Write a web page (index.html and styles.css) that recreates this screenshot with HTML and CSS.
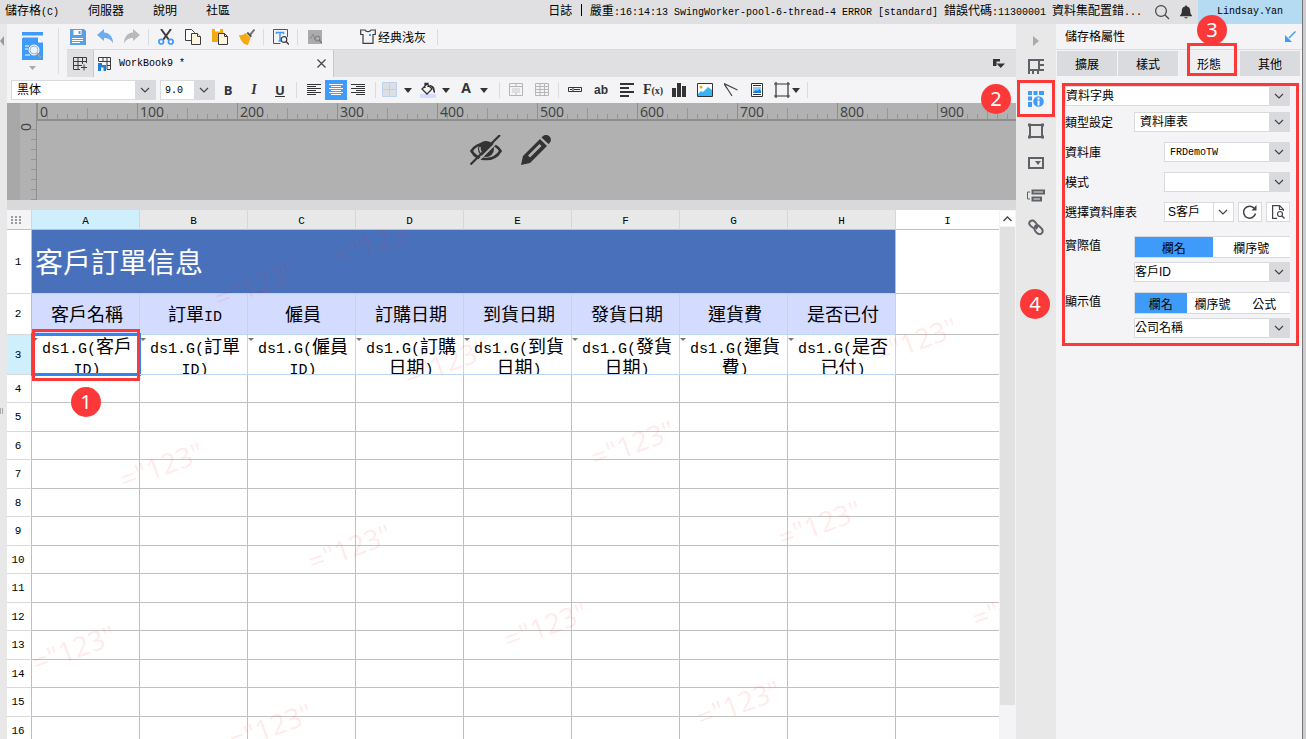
FILE: index.html
```html
<!DOCTYPE html>
<html lang="zh-Hant">

<head>
    <meta charset="utf-8">
    <title>WorkBook9</title>
    <link rel="stylesheet" href="styles.css">
</head>

<body>

    <div class="app">

        <header class="topbar">
            <nav class="menu">
                <a href="#">儲存格<span class="code">(C)</span></a>
                <a href="#">伺服器</a>
                <a href="#">說明</a>
                <a href="#">社區</a>
            </nav>
            <div class="log">日誌 <span class="log-bar"></span> 嚴重<span class="code">:16:14:13 SwingWorker-pool-6-thread-4 ERROR [standard] </span>錯誤代碼<span class="code">:11300001 </span>資料集配置錯<span class="code">...</span></div>
            <button class="icon-btn" aria-label="搜尋">
                <svg width="16" height="16" viewBox="0 0 16 16" fill="none" stroke="#444" stroke-width="1.2"><circle cx="7" cy="7" r="5.4"/><path d="M11 11l4 4"/></svg>
            </button>
            <button class="icon-btn" aria-label="通知">
                <svg width="14" height="14" viewBox="0 0 14 14" fill="#333"><path d="M7 0.5c.8 0 1 .5 1 1 2.300.5 3.200 2.200 3.200 4.500 0 2.500.8 3.500 1.800 4.500v.8H1v-.8c1-1 1.800-2 1.800-4.500C2.800 3.700 3.700 2 6 1.500c0-.5.2-1 1-1zM5.300 12.200h3.400c-.3 1.600-3.100 1.600-3.400 0z"/></svg>
            </button>
            <a class="user code" href="#">Lindsay.Yan</a>
        </header>

        <div class="main">

            <div class="left-edge">
                <svg width="4" height="10" viewBox="0 0 4 10"><path d="M4 0v10L0 5z" fill="#999"/></svg>
                <svg class="grip" width="4" height="6" viewBox="0 0 4 6"><path d="M.5 0v6M2.500 0v6" stroke="#aaa"/></svg>
            </div>

            <main class="workspace">

                <div class="upper">
                    <button class="dataset" aria-label="資料集">
                        <svg width="22" height="28" viewBox="0 0 22 28"><path fill="#3f9bfa" d="M0 0h21v3.500H0zM1 5.500h15l5 5V28H0V6.500z"/><path fill="#fff" d="M16 5.500v5h5z"/><path d="M3 14h4M3 17h3M3 23h5" stroke="#fff"/><circle cx="12" cy="18" r="5" fill="#e6f2ff" stroke="#fff"/><circle cx="12" cy="18" r="4" fill="#e6f2ff" stroke="#a5b5c8"/><path d="M15 21.500l4 4" stroke="#9a9a9a" stroke-width="2.400"/></svg>
                        <svg width="8" height="5" viewBox="0 0 8 5"><path d="M0 0h7L3.500 4z" fill="#aaa"/></svg>
                    </button>

                    <div class="upper-right">
                        <div class="tools">
                            <button aria-label="儲存"><svg width="16" height="16" viewBox="0 0 16 16"><path fill="#5b9fe3" d="M0 0h14l2 2v14H0z"/><path fill="#fff" d="M3.500 1h8v5h-8zM2 9h11v1H2zM2 11h11v1H2zM2 13h8v1H2z"/><path fill="#5b9fe3" d="M8.500 2h2v3h-2z"/></svg></button>
                            <button aria-label="復原"><svg width="16" height="16" viewBox="0 0 16 16"><path fill="#6badf0" d="M0 6L7 0v3.500c6 .5 9 5 9 11-2-4-5-5.500-9-5.500V12z"/></svg></button>
                            <button aria-label="重做"><svg width="16" height="16" viewBox="0 0 16 16"><path fill="#b9b9bc" d="M16 6L9 0v3.500C3 4 0 8.500 0 14.500 2 10.500 5 9 9 9v3z"/></svg></button>
                            <span class="sep"></span>
                            <button aria-label="剪下"><svg width="16" height="16" viewBox="0 0 16 16" fill="none"><path d="M3 0l8 11M13 0L5 11" stroke="#3c3c40" stroke-width="2"/><circle cx="3.200" cy="12.700" r="2.300" stroke="#3f9bfa" stroke-width="1.700"/><circle cx="12.800" cy="12.700" r="2.300" stroke="#3f9bfa" stroke-width="1.700"/></svg></button>
                            <button aria-label="複製"><svg width="16" height="16" viewBox="0 0 16 16" fill="#fff" stroke="#3c3c40"><path d="M.5 .5h6l3 3v8h-9z"/><path fill="#fdf6dc" d="M6.500 4.500h6l3 3v8h-9z"/><path d="M12.500 4.500v3h3"/></svg></button>
                            <button aria-label="貼上"><svg width="16" height="16" viewBox="0 0 16 16"><path fill="#f5aa14" d="M0 0h11v13H0z"/><path fill="#fff" d="M3 0h5v2.500H3z"/><path fill="#fdf6dc" stroke="#3c3c40" d="M6.500 4.500h6l3 3v8h-9z"/><path fill="none" stroke="#3c3c40" d="M12.500 4.500v3h3"/></svg></button>
                            <button aria-label="格式刷"><svg width="16" height="16" viewBox="0 0 16 16"><path d="M15.500 .5l-5 6" stroke="#77777c" stroke-width="2"/><path fill="#f5aa14" d="M0 6c3 .5 5-.5 6.500-2l5 5-2.500 7c-4 0-7.500-4-9-10z"/><path fill="#55555a" d="M7.500 4l1.500-1 4 4-1.500 1.500z"/></svg></button>
                            <span class="sep"></span>
                            <button aria-label="範本預覽"><svg width="16" height="16" viewBox="0 0 16 16" fill="none"><path d="M14.500 8V.5H.5v14h7" stroke="#55555a"/><path d="M3.500 5V3.500h7V5M7 3.500V12M5.500 12h3" stroke="#3f9bfa" stroke-width="1.500"/><circle cx="11" cy="10.500" r="2.800" stroke="#3c3c40" stroke-width="1.200"/><path d="M13 12.500l3 3" stroke="#3c3c40" stroke-width="1.500"/></svg></button>
                            <span class="sep"></span>
                            <button aria-label="監控"><svg width="14" height="14" viewBox="0 0 14 14" fill="none"><path fill="#ababad" d="M0 0h14v14H0z"/><path d="M1 8h2l2-4 2 6" stroke="#8b8b8e"/><circle cx="9.500" cy="8.500" r="2.500" stroke="#77777a"/><path d="M11 10l3 3" stroke="#77777a" stroke-width="1.400"/></svg></button>
                            <button class="theme" lang="zh-Hans"><svg width="16" height="15" viewBox="0 0 16 15" fill="none"><path d="M.7 1H5c1 2.200 5 2.200 6 0h4.300v4.500H13V14.300H3V5.500H.7z" stroke="#3c3c40" stroke-width="1.200"/><path d="M9 5h2v2H9z" fill="#3f9bfa"/></svg>经典浅灰</button>
                            <span class="sep"></span>
                        </div>

                        <div class="tabs">
                            <button class="tab-add" aria-label="新增範本"><svg width="15" height="14" viewBox="0 0 15 14" fill="none" stroke="#3c3c40"><path d="M.5 .5h13v4H.5zM.5 4.500v8H7M.5 8.500H9M5 .5v12M9.500 .5V7M13.500 4v2M11 7.500v6M8 10.500h6"/></svg></button>
                            <div class="tab-active">
                                <svg width="15" height="14" viewBox="0 0 15 14" fill="none" stroke="#3c3c40"><path d="M.5 4V.5h12v12H9M.5 4.500h12M5 .5v4M9 .5v12M9 8.500h4"/><path d="M0 6h4v2h4v6H5.500V10.500H3V14H0z" fill="#1f7fd4" stroke="none"/></svg>
                                <a class="code" href="#">WorkBook9 *</a>
                                <button class="close" aria-label="關閉"><svg width="9" height="9" viewBox="0 0 9 9"><path d="M.5 .5l8 8M8.500 .5l-8 8" stroke="#444" stroke-width="1.200"/></svg></button>
                            </div>
                            <button class="tab-list" aria-label="範本列表"><svg width="13" height="11" viewBox="0 0 13 11" fill="#333"><path d="M1 1h7v2.500H4.500V8H1zM4.500 5.500H13L8.700 10z"/></svg></button>
                        </div>
                    </div>
                </div>

                <div class="format">
                    <select class="font-name" aria-label="字型"><option>黑体</option></select>
                    <select class="font-size code" aria-label="字號"><option>9.0</option></select>
                    <div class="group">
                        <button class="letter" aria-label="粗體"><b>B</b></button>
                        <button class="letter" aria-label="斜體"><i>I</i></button>
                        <button class="letter" aria-label="底線"><u>U</u></button>
                    </div>
                    <span class="sep"></span>
                    <div class="group aligns">
                        <button aria-label="靠左"><svg width="14" height="12" viewBox="0 0 14 12" stroke="#333"><path d="M0 .5h14M0 2.500h9M0 4.500h14M0 6.500h9M0 8.500h14M0 10.500h9"/></svg></button>
                        <button class="on" aria-label="置中"><svg width="14" height="12" viewBox="0 0 14 12" stroke="#fff"><path d="M0 .5h14M2 2.500h10M0 4.500h14M2 6.500h10M0 8.500h14M2 10.500h10"/></svg></button>
                        <button aria-label="靠右"><svg width="14" height="12" viewBox="0 0 14 12" stroke="#333"><path d="M0 .5h14M5 2.500h9M0 4.500h14M5 6.500h9M0 8.500h14M5 10.500h9"/></svg></button>
                    </div>
                    <span class="sep"></span>
                    <div class="group drops">
                        <button aria-label="框線"><svg width="16" height="16" viewBox="0 0 16 16"><path d="M.5 .5h14v14H.5zM7.500 .5v14M.5 7.500h14" fill="#dedfe2" stroke="#b9d2f2"/></svg><span class="caret"></span></button>
                        <button aria-label="背景色"><svg width="16" height="16" viewBox="0 0 16 16" fill="none"><path fill="#d3dbff" d="M0 12h16v4H0z"/><path d="M7 2l5 5-5 5-5-5zM5 6V1.500h3V5" stroke="#333" stroke-width="1.300"/><path fill="#333" d="M9 3c4 0 6 2 6 8-1.500 0-2-2-2-4z"/></svg><span class="caret"></span></button>
                        <button aria-label="字色"><span class="font-color">A</span><span class="caret"></span></button>
                    </div>
                    <span class="sep"></span>
                    <div class="group">
                        <button aria-label="合併"><svg width="14" height="14" viewBox="0 0 14 14" fill="none" stroke="#b5b5b8"><path d="M.5 .5h13v12H.5zM.5 3.500h13M7 .5v3M7 10v3"/><path fill="#dedee0" stroke="none" d="M3 5h8v5H3z"/></svg></button>
                        <button aria-label="取消合併"><svg width="14" height="14" viewBox="0 0 14 14" fill="none" stroke="#b5b5b8"><path d="M.5 .5h13v12H.5zM.5 3.500h13M.5 6.500h13M.5 9.500h13M5 .5v12M9.500 .5v12"/></svg></button>
                    </div>
                    <span class="sep"></span>
                    <div class="group">
                        <button aria-label="資料欄"><svg width="14" height="6" viewBox="0 0 14 6" fill="none" stroke="#333"><path d="M.5 .5h13v4H.5zM2 2.500h2M6 2.500h6M5 1v3"/></svg></button>
                        <button class="ab" aria-label="一般文字">ab</button>
                        <button aria-label="富文本"><svg width="15" height="14" viewBox="0 0 15 14" stroke="#333" stroke-width="2"><path d="M0 1h14M0 5h9M0 9h14M0 13h9"/></svg></button>
                        <button class="fx" aria-label="公式"><b>F</b>(x)</button>
                        <button aria-label="圖表"><svg width="14" height="14" viewBox="0 0 14 14" fill="#333"><path d="M0 5h4v9H0zM5 0h4v14H5zM10 3h4v11h-4z"/></svg></button>
                        <button aria-label="圖片"><svg width="16" height="14" viewBox="0 0 16 14"><path d="M.5 .5h15v13H.5z" fill="#fff" stroke="#333"/><circle cx="4" cy="4" r="1.500" fill="#f5aa14"/><path fill="#35b5f5" d="M1 11l3-3 2 1 5-5 4 3v6H1z"/></svg></button>
                        <button aria-label="斜線"><svg width="14" height="14" viewBox="0 0 14 14" fill="none" stroke="#444" stroke-width="1.200"><path d="M13.500 7L0 .5 8 13M0 .5l3 5"/></svg></button>
                        <button aria-label="子報表"><svg width="12" height="14" viewBox="0 0 12 14"><path d="M.5 .5h11v13H.5zM2 2.500h8M2 11.500h8" fill="#fff" stroke="#333"/><path fill="#8ecbf8" d="M2 4h8v6H2z"/><path fill="#1f7fd4" d="M2 9l3-2 2 1 1-2 2 2v2H2z"/></svg></button>
                        <button class="widget" aria-label="元件"><svg width="16" height="16" viewBox="0 0 16 16"><path d="M2 0v16M14 0v16M0 2h16M0 14h16" stroke="#333" stroke-width="1.200"/></svg><span class="caret"></span></button>
                    </div>
                    <span class="sep"></span>
                </div>

                <section class="canvas">
                    <div class="v-ruler"><span>0</span></div>
                    <div class="board">
                        <div class="h-ruler">
                            <span>0</span><span>100</span><span>200</span><span>300</span><span>400</span><span>500</span><span>600</span><span>700</span><span>800</span><span>900</span>
                        </div>
                        <div class="board-icons">
                            <svg width="32" height="30" viewBox="0 0 32 30" fill="none"><path d="M1.500 16C7.500 6.500 24 5.500 30.500 16 24 27 7.500 26.500 1.500 16z" stroke="#333" stroke-width="2.600"/><circle cx="16" cy="14" r="8" fill="#333"/><path d="M10 12c-.5 3 .5 5 2.500 7" stroke="#b1b1b1" stroke-width="1.500"/><path d="M32.500 1.500L4 30" stroke="#b1b1b1" stroke-width="2"/><path d="M30 0L.5 29.500" stroke="#333" stroke-width="2.200"/></svg>
                            <svg width="30" height="30" viewBox="0 0 30 30" fill="#333"><path fill-rule="evenodd" d="M19 4l7 7L9 28l-9 2 2-9zM18.500 9L7 20.500l2 2L20.500 11z"/><path d="M20.500 2.500c3-3.500 6-3 8-1s2 5-1 7.500z"/></svg>
                        </div>
                    </div>
                </section>

                <section class="sheet">
                    <div class="sheet-view">
                        <table>
                            <colgroup>
                                <col class="col-num"><col class="col"><col class="col"><col class="col"><col class="col"><col class="col"><col class="col"><col class="col"><col class="col"><col>
                            </colgroup>
                            <thead>
                                <tr>
                                    <th class="corner"><svg width="10" height="8" viewBox="0 0 10 8" fill="#999"><path d="M0 0h2v2H0zM4 0h2v2H4zM8 0h2v2H8zM0 3h2v2H0zM4 3h2v2H4zM8 3h2v2H8zM0 6h2v2H0zM4 6h2v2H4zM8 6h2v2H8z"/></svg></th>
                                    <th class="current">A</th><th>B</th><th>C</th><th>D</th><th>E</th><th>F</th><th>G</th><th>H</th><th class="free">I</th>
                                </tr>
                            </thead>
                            <tbody>
                                <tr class="row-title"><th>1</th><td colspan="8">客戶訂單信息</td><td></td></tr>
                                <tr class="row-head"><th>2</th><td>客戶名稱</td><td>訂單<span>ID</span></td><td>僱員</td><td>訂購日期</td><td>到貨日期</td><td>發貨日期</td><td>運貨費</td><td>是否已付</td><td></td></tr>
                                <tr class="row-data"><th class="current">3</th>
                                    <td class="selected"><div><span>ds1.G(</span>客戶<span>ID)</span></div></td>
                                    <td><div><span>ds1.G(</span>訂單<span>ID)</span></div></td>
                                    <td><div><span>ds1.G(</span>僱員<span>ID)</span></div></td>
                                    <td><div><span>ds1.G(</span>訂購日期<span>)</span></div></td>
                                    <td><div><span>ds1.G(</span>到貨日期<span>)</span></div></td>
                                    <td><div><span>ds1.G(</span>發貨日期<span>)</span></div></td>
                                    <td><div><span>ds1.G(</span>運貨費<span>)</span></div></td>
                                    <td><div><span>ds1.G(</span>是否已付<span>)</span></div></td>
                                    <td></td>
                                </tr>
                                <tr><th>4</th><td></td><td></td><td></td><td></td><td></td><td></td><td></td><td></td><td></td></tr>
                                <tr><th>5</th><td></td><td></td><td></td><td></td><td></td><td></td><td></td><td></td><td></td></tr>
                                <tr><th>6</th><td></td><td></td><td></td><td></td><td></td><td></td><td></td><td></td><td></td></tr>
                                <tr><th>7</th><td></td><td></td><td></td><td></td><td></td><td></td><td></td><td></td><td></td></tr>
                                <tr><th>8</th><td></td><td></td><td></td><td></td><td></td><td></td><td></td><td></td><td></td></tr>
                                <tr><th>9</th><td></td><td></td><td></td><td></td><td></td><td></td><td></td><td></td><td></td></tr>
                                <tr><th>10</th><td></td><td></td><td></td><td></td><td></td><td></td><td></td><td></td><td></td></tr>
                                <tr><th>11</th><td></td><td></td><td></td><td></td><td></td><td></td><td></td><td></td><td></td></tr>
                                <tr><th>12</th><td></td><td></td><td></td><td></td><td></td><td></td><td></td><td></td><td></td></tr>
                                <tr><th>13</th><td></td><td></td><td></td><td></td><td></td><td></td><td></td><td></td><td></td></tr>
                                <tr><th>14</th><td></td><td></td><td></td><td></td><td></td><td></td><td></td><td></td><td></td></tr>
                                <tr><th>15</th><td></td><td></td><td></td><td></td><td></td><td></td><td></td><td></td><td></td></tr>
                                <tr><th>16</th><td></td><td></td><td></td><td></td><td></td><td></td><td></td><td></td><td></td></tr>
                            </tbody>
                        </table>

                        <!-- watermark -->
                        <div class="marks">
                            <span class="wm wm-1">="123"</span>
                            <span class="wm wm-2">="123"</span>
                            <span class="wm wm-3">="123"</span>
                            <span class="wm wm-4">="123"</span>
                            <span class="wm wm-5">="123"</span>
                            <span class="wm wm-6">="123"</span>
                            <span class="wm wm-7">="123"</span>
                            <span class="wm wm-8">="123"</span>
                            <span class="wm wm-9">="123"</span>
                            <span class="wm wm-10">="123"</span>
                            <span class="wm wm-11">="123"</span>
                            <span class="wm wm-12">="123"</span>
                            <span class="wm wm-13">="123"</span>
                        </div>

                        <div class="box box-1"></div>
                        <div class="badge badge-1">1</div>
                    </div>
                    <div class="scrollbar">
                        <button aria-label="向上捲動"><svg width="9" height="6" viewBox="0 0 9 6" fill="none"><path d="M.5 5l4-4 4 4" stroke="#444" stroke-width="1.300"/></svg></button>
                        <div class="thumb"></div>
                    </div>
                </section>
            </main>

            <nav class="rail">
                <button class="fold" aria-label="收合"><svg width="6" height="10" viewBox="0 0 6 10"><path d="M0 0v10l6-5z" fill="#aaa"/></svg></button>
                <button aria-label="儲存格元素"><svg width="16" height="16" viewBox="0 0 16 16" fill="none" stroke="#5f6169" stroke-width="2"><path d="M1 15V1h15M1 11h10V1M5 11v4M10 11v4M11 6h5M11 11h5"/></svg></button>
                <button class="on" aria-label="儲存格屬性"><svg width="16" height="16" viewBox="0 0 16 16" fill="#3f9bfa"><path d="M0 0h4v4H0zM5.500 0h4v4h-4zM11 0h5v4h-5zM0 5.500h4v4H0zM0 11h4v5H0z"/><circle cx="10.500" cy="10.500" r="5.300"/><path d="M9.500 6.500h2v2h-2zM9.500 9.500h2v5h-2z" fill="#fff"/></svg></button>
                <button aria-label="懸浮元素"><svg width="16" height="16" viewBox="0 0 16 16" fill="none" stroke="#5f6169" stroke-width="2"><path d="M2 2h12v12H2z"/><path stroke-width="3" d="M0 2h3M13 2h3M0 14h3M13 14h3"/></svg></button>
                <button aria-label="元件設定"><svg width="16" height="12" viewBox="0 0 16 12"><path d="M1 1h14v10H1z" fill="none" stroke="#5f6169" stroke-width="2"/><path d="M7 4h6l-3 4z" fill="#5f6169"/></svg></button>
                <button aria-label="條件屬性"><svg width="18" height="13" viewBox="0 0 18 13" fill="none" stroke="#5f6169" stroke-width="2"><path d="M5.500 1.500H17v3H5.500zM5.500 8.500H14v3H5.500z"/><path stroke-width="1" d="M3 3H.5v7H3"/></svg></button>
                <button aria-label="超連結"><svg width="16" height="16" viewBox="0 0 16 16" fill="none" stroke="#5f6169" stroke-width="2"><path d="M9 8L5.500 9C2 7 0 4.500 2 2.500s4-1 6 1.500 2 3.500 1 4.500zM7 8c0-2 2-2.500 4-1s5 4.500 3 7-5 .5-6.500-1.500S6 9.500 7 8z"/></svg></button>
                <div class="box box-2"></div>
                <div class="badge badge-2">2</div>
                <div class="badge badge-4">4</div>
            </nav>

            <aside class="panel">
                <div class="panel-title">儲存格屬性
                    <button aria-label="彈出"><svg width="11" height="11" viewBox="0 0 11 11" fill="none"><path d="M10.500 .5L4 7" stroke="#3f9bfa" stroke-width="1.500"/><path d="M0 4v7h7z" fill="#3f9bfa"/></svg></button>
                </div>
                <div class="panel-tabs">
                    <button>擴展</button>
                    <button>樣式</button>
                    <button class="on">形態</button>
                    <button>其他</button>
                </div>
                <form class="form">
                    <div class="field"><select aria-label="形態類型"><option>資料字典</option></select></div>
                    <div class="field">
                        <label for="type">類型設定</label>
                        <select class="wide pad" id="type"><option>資料庫表</option></select>
                    </div>
                    <div class="field spaced">
                        <label for="db">資料庫</label>
                        <select class="medium pad code" id="db"><option>FRDemoTW</option></select>
                    </div>
                    <div class="field spaced">
                        <label for="schema">模式</label>
                        <select class="medium" id="schema"><option></option></select>
                    </div>
                    <div class="field spaced">
                        <label for="tbl">選擇資料庫表</label>
                        <div class="medium table-pick">
                            <select class="plain" id="tbl"><option>S客戶</option></select>
                            <button type="button" aria-label="重新整理"><svg width="14" height="14" viewBox="0 0 14 14" fill="none" stroke="#444"><path stroke-width="1.500" d="M12.500 8.500A6 6 0 1 1 11 3"/><path fill="#444" stroke="none" d="M13.500 0v5.500H8.500z"/></svg></button>
                            <button type="button" aria-label="預覽"><svg width="13" height="14" viewBox="0 0 13 14" fill="none" stroke="#444" stroke-width="1.200"><path d="M5 13.400H.6V.6h7l3.800 3.800V6M7.500 1v3.500h4"/><circle cx="8" cy="9" r="2.500"/><path d="M10 11l2.500 2.500"/></svg></button>
                        </div>
                    </div>
                    <div class="field choice">
                        <label for="actual">實際值</label>
                        <div class="wide">
                            <div class="segments"><button type="button" class="on">欄名</button><button type="button">欄序號</button></div>
                            <select id="actual"><option>客戶ID</option></select>
                        </div>
                    </div>
                    <div class="field choice">
                        <label for="shown">顯示值</label>
                        <div class="wide">
                            <div class="segments"><button type="button" class="on">欄名</button><button type="button">欄序號</button><button type="button">公式</button></div>
                            <select id="shown"><option>公司名稱</option></select>
                        </div>
                    </div>
                </form>
                <div class="box box-3"></div>
                <div class="badge badge-3">3</div>
                <div class="box box-4"></div>
            </aside>
        </div>
    </div>

    <div class="window-edge"></div>

</body>

</html>
```
FILE: styles.css
```css
* {
    box-sizing: border-box;
}

body {
    margin: 0;
    display: flex;
    height: 100vh;
    overflow: hidden;
    background: #f4f4f7;
    color: #000;
    font-family: "Liberation Sans", "Noto Sans CJK TC", sans-serif;
    font-size: 12px;
    line-height: 16px;
}

button {
    display: flex;
    align-items: center;
    justify-content: center;
    padding: 0;
    border: none;
    background: none;
    color: inherit;
    font: inherit;
}

a {
    color: inherit;
    text-decoration: none;
}

svg {
    display: block;
    flex: none;
}

.code {
    font-family: "Liberation Mono", "Noto Sans CJK TC", monospace;
    font-size: 10px;
    white-space: pre;
}

select {
    appearance: none;
    height: 20px;
    width: 100%;
    padding: 0 20px 0 0;
    border: 1px solid #d9dadd;
    border-radius: 0;
    background: #fff url("data:image/svg+xml,%3Csvg xmlns='http://www.w3.org/2000/svg' width='20' height='20'%3E%3Crect width='20' height='20' fill='%23d9dadd'/%3E%3Cpath d='M6 8l4 4 4-4' fill='none' stroke='%23444' stroke-width='1.200'/%3E%3C/svg%3E") right center no-repeat;
    color: #000;
    font-family: inherit;
    font-size: 12px;
}

select.code {
    font-family: "Liberation Mono", monospace;
    font-size: 10px;
}

.app {
    flex: 1;
    min-width: 0;
    display: flex;
    flex-direction: column;
}

.window-edge {
    width: 4px;
    border-left: 1px solid #777;
    background: #cdcdcf;
}

/* top bar */

.topbar {
    display: flex;
    align-items: center;
    height: 24px;
    flex: none;
    background: #e0e0e2;
}

.menu {
    display: flex;
    gap: 29px;
    padding-left: 5px;
    flex: 1;
}

.log {
    white-space: pre;
}

.log-bar {
    display: inline-block;
    width: 1px;
    height: 12px;
    margin: 0 5px;
    background: #000;
    vertical-align: -1px;
}

.icon-btn {
    width: 24px;
    height: 24px;
    margin-left: 4px;
}

.icon-btn + .icon-btn {
    margin-left: 0;
}

.icon-btn:first-of-type {
    margin-left: 8px;
}

.user {
    width: 104px;
    line-height: 24px;
    background: #b5dbf2;
    text-align: center;
}

.main {
    display: flex;
    flex: 1;
    min-height: 0;
}

.left-edge {
    width: 7px;
    padding-top: 12px;
    background: #e8e8e8;
}

.grip {
    margin-top: 362px;
}

.workspace {
    flex: 1;
    min-width: 0;
    display: flex;
    flex-direction: column;
}

/* toolbars */

.upper {
    display: flex;
    height: 53px;
    flex: none;
}

.dataset {
    width: 52px;
    height: 46px;
    margin-top: 4px;
    flex-direction: column;
    gap: 6px;
    border-right: 1px solid #dcdcdf;
}

.upper-right {
    flex: 1;
    display: flex;
    flex-direction: column;
    padding-left: 5px;
}

.tools {
    display: flex;
    align-items: center;
    height: 25px;
}

.tools button {
    width: 27px;
    height: 24px;
}

.sep {
    width: 1px;
    height: 16px;
    margin: 0 3px;
    background: #dcdcdf;
}

.tools .theme {
    width: auto;
    gap: 2px;
    margin: 0 8px 0 32px;
    font-family: "Noto Sans CJK SC", sans-serif;
}

.tabs {
    display: flex;
    height: 28px;
    margin-left: 3px;
    border-top: 1px solid #d9d9dc;
    background: #e0e0e2;
}

.tab-add {
    width: 27px;
    border-right: 1px solid #c8c8cb;
}

.tab-active {
    display: flex;
    align-items: center;
    gap: 6px;
    width: 240px;
    padding: 0 7px 0 4px;
    border-right: 1px solid #c8c8cb;
    background: #f4f4f7;
}

.close {
    margin-left: auto;
}

.tab-list {
    width: 36px;
    margin-left: auto;
}

.format {
    display: flex;
    align-items: center;
    height: 26px;
    flex: none;
    padding-left: 4px;
}

.font-name {
    width: 145px;
    padding-left: 5px;
}

.font-size {
    width: 55px;
    margin: 0 0 0 4px;
    padding-left: 4px;
}

.group {
    display: flex;
    align-items: center;
}

.group button {
    width: 26px;
    height: 20px;
}

.letter {
    font-family: "Open Sans", sans-serif;
    font-size: 13px;
    color: #333;
}

.letter i {
    font-family: "Liberation Serif", serif;
    font-weight: bold;
    font-size: 14px;
}

.letter u {
    font-weight: bold;
}

.group.aligns,
.group.drops {
    padding-left: 3px;
}

.group.aligns {
    padding-right: 3px;
}

.group.aligns button {
    width: 22px;
}

.group.aligns .on {
    background: #3f9bfa;
}

.group.drops button {
    width: 38px;
    gap: 6px;
    justify-content: flex-start;
}

.caret {
    border: 4px solid transparent;
    border-top: 5px solid #333;
    border-bottom: none;
}

.font-color {
    width: 16px;
    height: 16px;
    border-bottom: 4px solid #e3f7fd;
    font: bold 14px/11px "Open Sans", sans-serif;
    color: #333;
    text-align: center;
}

.ab {
    font: bold 12px "Liberation Sans", sans-serif;
    color: #333;
}

.group .fx {
    font: bold 10px "Liberation Serif", serif;
    color: #333;
}

.fx b {
    font-size: 14px;
}

.group .widget {
    width: 34px;
    gap: 2px;
}

/* design board with rulers */

.canvas {
    display: flex;
    height: 97px;
    flex: none;
    background: #b1b1b1;
}

.v-ruler {
    width: 30px;
    padding: 17px 0 0 13px;
    border-right: 1px solid #8e8e8e;
    background:
        repeating-linear-gradient(to bottom, transparent 0 9px, #969696 9px 10px) right 17px / 5px 80px no-repeat,
        linear-gradient(to right, #a8a8a8 13px, #b1b1b1 13px);
}

.v-ruler span {
    display: block;
    width: 12px;
    height: 10px;
    color: #444;
    font: 14px/10px "Noto Sans", sans-serif;
    transform: rotate(-90deg);
}

.board {
    flex: 1;
    min-width: 0;
}

.h-ruler {
    display: flex;
    height: 18px;
    overflow: hidden;
    border-bottom: 2px solid #8e8e8e;
    background:
        repeating-linear-gradient(to right, #8e8e8e 0 1px, transparent 1px 100px) left top / 100% 16px no-repeat,
        repeating-linear-gradient(to right, #969696 0 1px, transparent 1px 50px) left bottom / 100% 11px no-repeat,
        repeating-linear-gradient(to right, #969696 0 1px, transparent 1px 10px) left bottom / 100% 5px no-repeat;
}

.h-ruler span {
    width: 100px;
    flex: none;
    padding-left: 3px;
    color: #444;
    font: 14px/18px "Noto Sans", sans-serif;
}

.board-icons {
    display: flex;
    justify-content: center;
    gap: 19px;
    padding: 14px 32px 0 0;
}

/* sheet */

.sheet {
    display: flex;
    flex: 1;
    min-height: 0;
    border-top: 10px solid #d9d9db;
    background: #f4f4f7;
}

.sheet-view {
    position: relative;
    flex: 1;
    min-width: 0;
    overflow: hidden;
    background: #fff;
}

table {
    width: 100%;
    table-layout: fixed;
    border-collapse: separate;
    border-spacing: 0;
}

.col-num {
    width: 25px;
}

.col {
    width: 108px;
}

th,
td {
    height: 28px;
    padding: 0;
    border-right: 1px solid #c0c0c0;
    border-bottom: 1px solid #c0c0c0;
    text-align: center;
}

tr:nth-child(odd) td {
    height: 29px;
}

th {
    font-family: "Liberation Mono", monospace;
    font-size: 11px;
    font-weight: normal;
    line-height: 14px;
}

tbody th {
    border-bottom-color: #d9d9dc;
    padding-right: 2px;
}

thead th {
    height: 20px;
    padding-top: 3px;
    border-right-color: #d6d6d8;
    background: #e8e8e8;
}

thead .corner {
    padding: 0 0 0 4px;
    background: #f4f4f7;
}

thead .free {
    background: #fff;
}

th.current,
thead .current {
    background: #ceeffb;
}

th:last-child,
td:last-child {
    border-right: none;
}

tr.row-title td {
    height: 64px;
}

.row-title td:nth-child(2) {
    padding: 4px 0 0 3px;
    border-bottom-color: #bcd6f5;
    background: #4970bb;
    color: #fff;
    font-size: 28px;
    line-height: 40px;
    text-align: left;
}

.row-head td {
    height: 41px;
    padding: 2px 0 0 3px;
    font-size: 18px;
    line-height: 24px;
}

.row-head td:not(:last-child) {
    border-color: #bcd6f5;
    background: #d3dbff;
}

tr.row-data td {
    height: 40px;
}

.row-data td:not(:last-child) {
    position: relative;
    border-color: #bcd6f5;
}

.row-data div {
    height: 39px;
    padding: 2px 0 0 3px;
    overflow: hidden;
    font-size: 18px;
    line-height: 21px;
}

.row-head span,
.row-data span {
    font-family: "Liberation Mono", monospace;
    font-size: 15px;
    line-height: 1px;
}

/* expansion arrow in the cell corner */
.row-data td:not(:last-child)::before {
    content: "";
    position: absolute;
    left: 0;
    top: 3px;
    border: 3px solid transparent;
    border-top-color: #777;
    border-bottom: none;
}

.row-data .selected::after {
    content: "";
    position: absolute;
    left: -1px;
    right: -2px;
    top: -2px;
    bottom: -2px;
    border: 3px solid #3583ee;
}

.marks {
    position: absolute;
    left: 25px;
    top: 20px;
    right: 0;
    bottom: 0;
    overflow: hidden;
    pointer-events: none;
}

.wm {
    position: absolute;
    color: rgba(255, 50, 50, 0.1);
    font: 28px/32px "Noto Sans", sans-serif;
    transform: rotate(-20deg);
}

.wm-1 { left: 86px; top: 219px; }
.wm-2 { left: 274px; top: 301px; }
.wm-3 { left: -2px; top: 402px; }
.wm-4 { left: 195px; top: 480px; }
.wm-5 { left: 557px; top: 197px; }
.wm-6 { left: 744px; top: 277px; }
.wm-7 { left: 470px; top: 379px; }
.wm-8 { left: 938px; top: 358px; }
.wm-9 { left: 663px; top: 457px; }
.wm-10 { left: 840px; top: 94px; }
.wm-11 { left: 370px; top: 116px; }
.wm-12 { left: 180px; top: 38px; }
.wm-13 { left: 300px; top: -4px; }

.scrollbar {
    display: flex;
    flex-direction: column;
    width: 17px;
    padding: 1px 1px 34px;
}

.scrollbar button {
    height: 15px;
    flex: none;
    background: #fff;
}

.thumb {
    flex: 1;
    margin-top: 1px;
    background: #e1e1e1;
}

/* right icon rail */

.rail {
    position: relative;
    width: 40px;
    flex: none;
    background: #e8e8e8;
}

.rail button {
    width: 40px;
    height: 32px;
}

.rail .fold {
    height: 27px;
    padding-top: 7px;
}

.rail .on {
    background: #f4f4f7;
}

/* property panel */

.panel {
    position: relative;
    width: 246px;
    flex: none;
    background: #f4f4f7;
}

.panel-title {
    display: flex;
    align-items: center;
    justify-content: space-between;
    height: 26px;
    padding: 0 6px 0 9px;
    border-bottom: 1px solid #dcdcdf;
}

.panel-tabs {
    display: flex;
    gap: 1px;
    padding: 1px 2px 0 1px;
}

.panel-tabs button {
    flex: 1;
    height: 25px;
    padding-top: 3px;
    background: #dadbde;
}

.panel-tabs .on {
    background: #f0f0f2;
}

.form {
    padding: 10px 12px 0 9px;
}

.field {
    display: flex;
    align-items: center;
    justify-content: space-between;
    margin-bottom: 6px;
}

.field.spaced {
    margin: 10px 0;
}

.field label {
    padding-top: 2px;
    white-space: nowrap;
}

.field .wide {
    width: 156px;
}

.field .medium {
    width: 126px;
}

.field .pad {
    padding-left: 5px;
}

.table-pick {
    display: flex;
    gap: 4px;
}

.table-pick button {
    width: 24px;
    height: 20px;
    flex: none;
    border: 1px solid #d9dadd;
    background: #fff;
}

.table-pick .plain {
    padding-left: 3px;
    background-image: url("data:image/svg+xml,%3Csvg xmlns='http://www.w3.org/2000/svg' width='20' height='20'%3E%3Cpath d='M.5 0v20' stroke='%23d9dadd'/%3E%3Cpath d='M6 8l4 4 4-4' fill='none' stroke='%23444' stroke-width='1.200'/%3E%3C/svg%3E");
}

.field.choice {
    align-items: flex-start;
    margin: 14px 0 10px;
}

.field.choice + .field.choice {
    margin-top: 10px;
}

.segments {
    display: flex;
    height: 22px;
    margin-bottom: 4px;
    border: 1px solid #d9dadd;
    border-right: none;
    background: #fff;
}

.segments button {
    flex: 1;
    padding-top: 3px;
}

.segments .on {
    background: #3f9bfa;
}

/* numbered call-outs */

.box {
    position: absolute;
    border: 3px solid #fc3838;
    pointer-events: none;
}

.badge {
    position: absolute;
    z-index: 1;
    width: 30px;
    height: 30px;
    border-radius: 50%;
    background: #fc3838;
    color: #fff;
    font: 20px/30px "Noto Sans", sans-serif;
    text-align: center;
}

.box-1 { left: 25px; top: 119px; width: 108px; height: 52px; }
.badge-1 { left: 64px; top: 177px; }
.box-2 { left: 1px; top: 56px; width: 38px; height: 37px; }
.badge-2 { left: -35px; top: 60px; }
.badge-4 { left: 4px; top: 265px; }
.box-3 { left: 131px; top: 19px; width: 50px; height: 33px; }
.badge-3 { left: 141px; top: -9px; }
.box-4 { left: 6px; top: 59px; width: 237px; height: 263px; }
```
